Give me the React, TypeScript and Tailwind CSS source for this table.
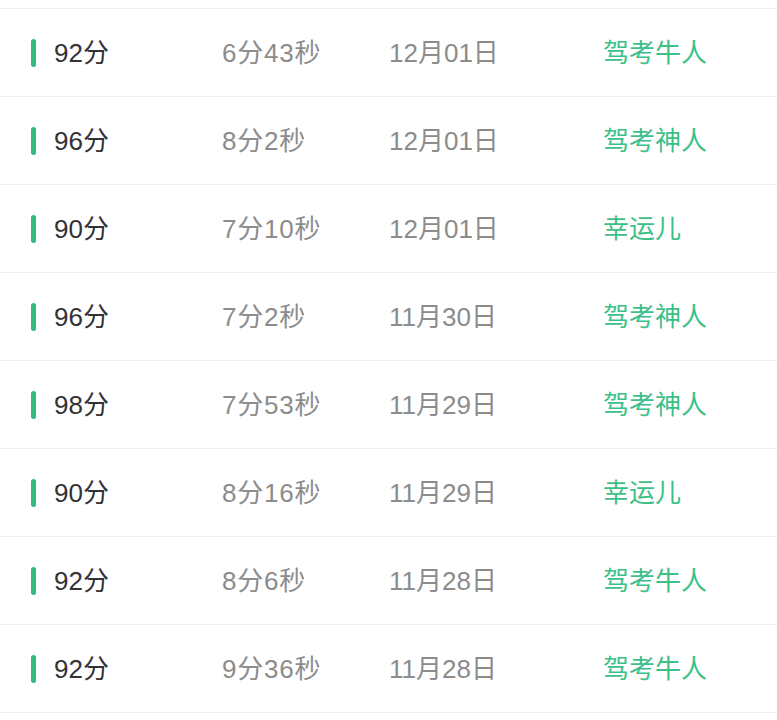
const records = [
  { score: '92分', time: '6分43秒', date: '12月01日', title: '驾考牛人' },
  { score: '96分', time: '8分2秒', date: '12月01日', title: '驾考神人' },
  { score: '90分', time: '7分10秒', date: '12月01日', title: '幸运儿' },
  { score: '96分', time: '7分2秒', date: '11月30日', title: '驾考神人' },
  { score: '98分', time: '7分53秒', date: '11月29日', title: '驾考神人' },
  { score: '90分', time: '8分16秒', date: '11月29日', title: '幸运儿' },
  { score: '92分', time: '8分6秒', date: '11月28日', title: '驾考牛人' },
  { score: '92分', time: '9分36秒', date: '11月28日', title: '驾考牛人' },
]

export default function App() {
  return (
    <div
      className="w-full min-h-[720px] bg-white pt-2"
      style={{ fontFamily: '"Liberation Sans", "Noto Sans CJK SC", sans-serif' }}
    >
      <ul className="border-t border-[#efefef]">
        {records.map((r, i) => (
          <li
            key={i}
            className="flex h-[88px] items-center border-b border-[#efefef] pl-[31px] text-[26px] leading-none"
          >
            <span className="h-[28px] w-[5px] rounded-full bg-[#2dbd7e]" />
            <span className="ml-[18px] w-[168px] text-[#333333]">{r.score}</span>
            <span className="w-[167px] tracking-[0.8px] text-[#8c8c8c]">{r.time}</span>
            <span className="w-[214px] text-[#8c8c8c]">{r.date}</span>
            <span className="text-[#3dbf88]">{r.title}</span>
          </li>
        ))}
      </ul>
    </div>
  )
}
